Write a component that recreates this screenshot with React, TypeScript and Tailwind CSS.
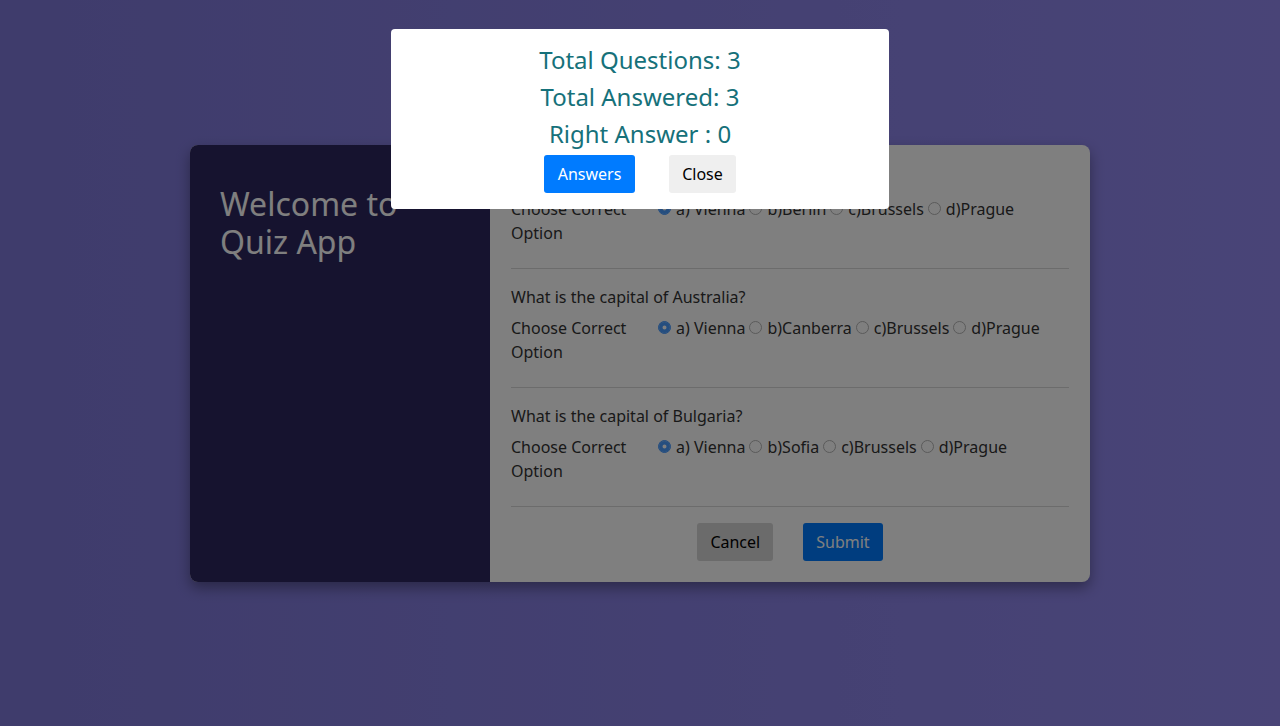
import React, { useState } from 'react';

interface Question {
  id: number;
  text: string;
  options: string[];
}

const questions: Question[] = [
  { id: 1, text: 'What is the capital of Germany?', options: ['a) Vienna', 'b)Berlin', 'c)Brussels', 'd)Prague'] },
  { id: 2, text: 'What is the capital of Australia?', options: ['a) Vienna', 'b)Canberra', 'c)Brussels', 'd)Prague'] },
  { id: 3, text: 'What is the capital of Bulgaria?', options: ['a) Vienna', 'b)Sofia', 'c)Brussels', 'd)Prague'] },
];

const App: React.FC = () => {
  const [answers, setAnswers] = useState<Record<number, number>>({ 1: 0, 2: 0, 3: 0 });
  const [showResult, setShowResult] = useState(true);

  return (
    <div className="relative min-h-screen w-full bg-linear-to-r from-[#7e78d8] to-[#9289ef] font-['Noto_Sans',sans-serif] text-[#333]">
      {/* Quiz card */}
      <div className="flex min-h-screen items-center justify-center">
        <div className="flex w-[900px] overflow-hidden rounded-lg bg-white shadow-[0_6px_14px_rgba(0,0,0,0.35)]">
          <div className="w-[300px] shrink-0 bg-[#2c265e] px-[30px] pt-[40px]">
            <h1 className="text-[32px] leading-[38px] text-white">
              Welcome to
              <br />
              Quiz App
            </h1>
          </div>
          <div className="flex-1 px-[21px] pt-[5px] pb-[21px]">
            {questions.map((q) => (
              <div key={q.id} className="border-b border-[#d9d9d9] pt-[16px] pb-[23px]">
                <p className="text-[16px] leading-[24px]">{q.text}</p>
                <div className="mt-[7px] flex">
                  <div className="w-[142px] shrink-0 text-[16px] leading-[24px]">Choose Correct Option</div>
                  <div className="flex flex-wrap items-start gap-x-[4px] pl-[5px] text-[16px] leading-[24px]">
                    {q.options.map((opt, i) => (
                      <label key={i} className="inline-flex items-center">
                        <input
                          type="radio"
                          name={'q' + q.id}
                          checked={answers[q.id] === i}
                          onChange={() => setAnswers({ ...answers, [q.id]: i })}
                          className="m-0 mr-[5px] h-[13px] w-[13px] appearance-none rounded-full border border-[#b5b5b5] bg-white checked:border-[#4a9cff] checked:bg-[#4a9cff] checked:shadow-[inset_0_0_0_3.5px_#4a9cff,inset_0_0_0_6px_#ffffff]"
                        />
                        {opt}
                      </label>
                    ))}
                  </div>
                </div>
              </div>
            ))}
            <div className="flex justify-center gap-[30px] pt-[16px]">
              <button className="h-[38px] rounded-[3px] bg-[#d6d6d6] px-[13px] text-[16px] text-black">Cancel</button>
              <button className="h-[38px] rounded-[3px] bg-[#007bff] px-[13px] text-[16px] text-white">Submit</button>
            </div>
          </div>
        </div>
      </div>

      {/* Result modal */}
      {showResult && (
        <div className="absolute inset-0 bg-black/50">
          <div className="mx-auto mt-[29px] w-[498px] rounded-[4px] bg-white pt-[12px] pb-[16px] text-center">
            <p className="text-[24px] leading-[37px] text-[#16717a]">Total Questions: 3</p>
            <p className="text-[24px] leading-[37px] text-[#16717a]">Total Answered: 3</p>
            <p className="text-[24px] leading-[37px] text-[#16717a]">Right Answer : 0</p>
            <div className="mt-[3px] flex justify-center gap-[34px]">
              <button className="h-[38px] w-[91px] rounded-[3px] bg-[#007bff] text-[16px] text-white">Answers</button>
              <button
                onClick={() => setShowResult(false)}
                className="h-[38px] w-[67px] rounded-[3px] bg-[#efefef] text-[16px] text-black"
              >
                Close
              </button>
            </div>
          </div>
        </div>
      )}
    </div>
  );
};

export default App;
